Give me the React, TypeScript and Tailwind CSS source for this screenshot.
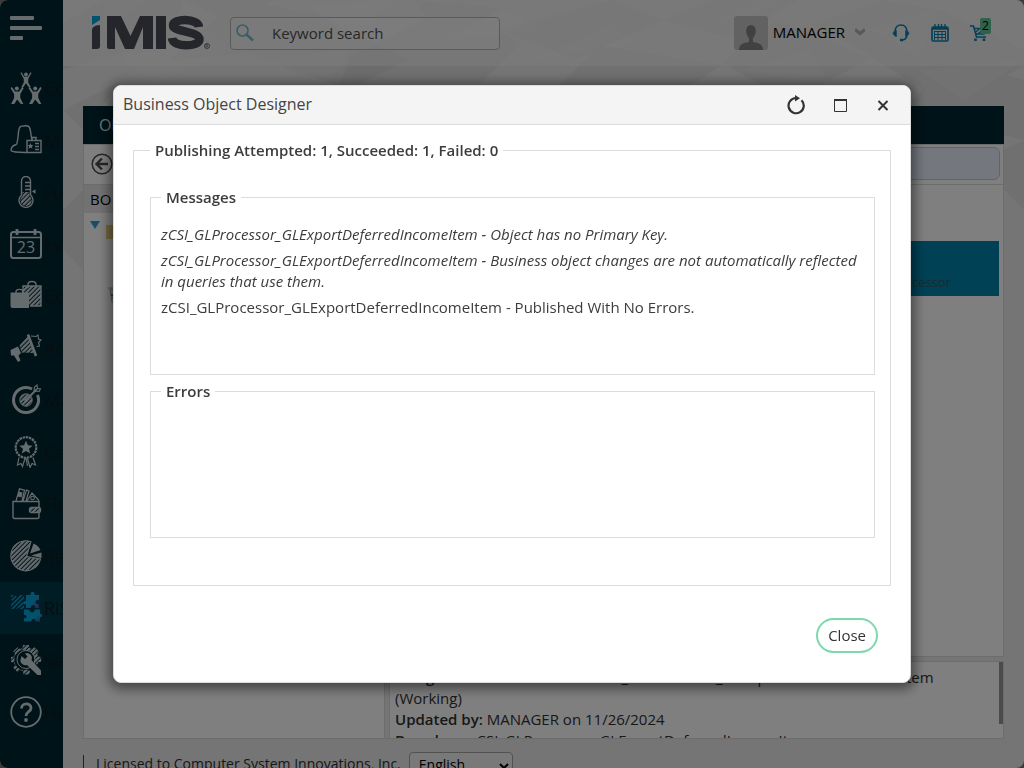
import React from 'react';

/** Stroke hatching shared by the navigation icons */
const Hatch: React.FC<{ id: string; color?: string }> = ({ id, color = '#ccd8dc' }) => (
  <pattern id={id} width="3.200" height="3.200" patternUnits="userSpaceOnUse" patternTransform="rotate(45)">
    <rect width="1.500" height="3.200" fill={color} />
  </pattern>
);

const NavSvg: React.FC<{ children: React.ReactNode }> = ({ children }) => (
  <svg
    viewBox="0 0 32 32"
    className="h-8 w-8 shrink-0 text-[#ccd8dc]"
    fill="none"
    stroke="currentColor"
    strokeWidth="1.4"
    aria-hidden="true"
  >
    {children}
  </svg>
);

const PERSON = 'M0 0l1.4-1 3.2 4.6h4L11.800-1l1.4 1-3.400 6v4l3 6h-2.400L6.600 11.500 3.800 16H.6l3-6V6z';

const CommunityIcon = () => (
  <NavSvg>
    <g fill="currentColor" stroke="none">
      <circle cx="16" cy="2.500" r="1.900" />
      <path d="M10.500 1l1-.7 2.700 4.500h3.600L20.500.3l1 .7-3.300 6v3.500l2.600 4.800h-2L16 11.200l-2.800 4.100h-2l2.600-4.800V7z" />
      <circle cx="6.800" cy="16.500" r="2" />
      <path d={PERSON} transform="translate(.5 16)" />
      <circle cx="25.200" cy="16.500" r="2" />
      <path d={PERSON} transform="translate(18.500 16)" />
    </g>
  </NavSvg>
);

const MembershipIcon = () => (
  <NavSvg>
    <path d="M6.500 20.500C9 14 7.500 6 10 3c1-1.500 2-.6 3.500-1 2-.4 4-.8 5.500.8 2 2.500 1.500 8 3 13M6.500 20.500C4 21 1.500 22.500 1 26c0 2 7 2.600 16 2.500" />
    <path d="M17 16.500h14v12H17zM22 16.500v-3h4v3" />
    <path d="M20.500 19l.9 2 2.100.1-1.600 1.500.6 2.200-2-1.200-2 1.200.6-2.200-1.600-1.500 2.100-.1z" fill="currentColor" stroke="none" />
    <path d="M25 19.500h4M25 22.500h4M25 25.500h4" />
  </NavSvg>
);

const ThermometerIcon = () => (
  <NavSvg>
    <defs><Hatch id="h-thermo" /></defs>
    <path d="M11.500 19V5a4.500 4.500 0 0 1 9 0v14a7 7 0 1 1-9 0z" />
    <path d="M12.500 16h7v4a5.600 5.600 0 1 1-7 0z" fill="url(#h-thermo)" stroke="none" />
    <path d="M15 6.500h5M15 10h5M15 13.500h5" />
    <path d="M22 15.500l3.500-2.200v4.400z" fill="currentColor" stroke="none" />
  </NavSvg>
);

const EventsIcon = () => (
  <NavSvg>
    <rect x="1" y="4" width="30" height="26" rx="2.500" strokeWidth="2" />
    <path d="M1 9.500h30" />
    <path d="M7 1v6M25 1v6" strokeWidth="2.800" />
    <text
      x="16"
      y="25"
      textAnchor="middle"
      fontSize="16"
      className="font-['Open_Sans',sans-serif]"
      fill="currentColor"
      stroke="none"
    >
      23
    </text>
  </NavSvg>
);

const CommerceIcon = () => (
  <NavSvg>
    <defs><Hatch id="h-bag" /></defs>
    <path d="M13 13V6h18v20H20" fill="url(#h-bag)" />
    <path d="M18 8V4.500c0-4 8-4 8 0V8" />
    <path d="M.5 12.500H19V28H2.500a2 2 0 0 1-2-2z" fill="currentColor" stroke="none" />
    <path d="M6 14v-2c0-3.500 7-3.500 7 0v2" />
  </NavSvg>
);

const AdvertisingIcon = () => (
  <NavSvg>
    <defs><Hatch id="h-horn" /></defs>
    <path d="M9.500 13.500L17.500 4l6 17-12-.5z" fill="url(#h-horn)" stroke="none" />
    <path d="M18 2.500l8 21.500" strokeWidth="2.600" />
    <path d="M.5 18L8 14.500l3 6.500-2.500 2.500 2 5-2.500 1.500L4 23.500H1z" fill="currentColor" stroke="none" />
    <path d="M21 4l5 .5 2-1.500.5 4 2.500 1-2.500 2.500 1 3.500-3 .5" strokeWidth="1.100" />
  </NavSvg>
);

const MarketingIcon = () => (
  <NavSvg>
    <defs><Hatch id="h-target" /></defs>
    <path d="M22 5A12.500 12.500 0 1 0 27.500 11" strokeWidth="3" />
    <circle cx="16" cy="16" r="6.200" fill="url(#h-target)" strokeWidth="1" />
    <path d="M15.500 16.500L27 5" strokeWidth="2" />
    <path d="M24 7l.5-4L27 1l.5 3.500 3 .5-1.500 2.500z" strokeWidth="1.100" />
    <circle cx="16" cy="16" r="1.800" fill="currentColor" stroke="none" />
  </NavSvg>
);

const CertificationIcon = () => (
  <NavSvg>
    <circle cx="16" cy="11.500" r="10.300" strokeWidth="2.200" strokeDasharray="2.500 .7" />
    <path d="M16 4.800l1.900 4.500 4.800.4-3.700 3.100 1.200 4.700-4.200-2.500-4.200 2.500 1.200-4.700-3.700-3.100 4.800-.4z" fill="currentColor" stroke="none" />
    <path d="M9 21.500l-1.500 7.500 3.500-1.500 1.500 3 2.500-8M23 21.500l2.500 7.500-3.500-1.500-2 4-2.500-9M16 22l1.500 8" strokeWidth="1.200" />
  </NavSvg>
);

const FinanceIcon = () => (
  <NavSvg>
    <defs><Hatch id="h-wallet" /></defs>
    <path d="M29 19v-5.500H3V29a1.500 1.500 0 0 0 1.500 1.500h23A1.500 1.500 0 0 0 29 29v-4" />
    <path d="M6 13L9.500.8l5 1.400L12 13M13 13l3.500-11 2.500 1-3 10M17 13l5-8 7 7.500" strokeWidth="1.200" />
    <path d="M8.500 3.500l4 1-1 5-4-1z" fill="currentColor" stroke="none" />
    <circle cx="22.500" cy="10" r="1.800" strokeWidth="1.100" />
    <rect x="19.500" y="19.500" width="11" height="5" rx="2" fill="url(#h-wallet)" />
  </NavSvg>
);

const ReportsIcon = () => (
  <NavSvg>
    <defs><Hatch id="h-pie" /></defs>
    <path d="M21 1.700A15 15 0 1 0 30.500 19L16.500 16.500z" fill="url(#h-pie)" strokeWidth="1.100" />
    <path d="M20 13.500l3.500-10c3.500 1.400 5.700 3.600 7 6.500zM21 15.500l10.500-3v5.500z" fill="currentColor" stroke="none" />
  </NavSvg>
);

const RiseIcon = () => (
  <svg viewBox="0 0 32 32" className="h-8 w-8 shrink-0" aria-hidden="true">
    <defs>
      <Hatch id="h-rise" color="#109bd0" />
      <linearGradient id="rise" x1="0" y1="0" x2="1" y2="1">
        <stop offset=".6" stopColor="#07a5da" />
        <stop offset="1" stopColor="#64408c" />
      </linearGradient>
    </defs>
    <path d="M1 3h4l2 2 3-2h4v4l-2 1.500L14 12v5H9l-1-2-1.500 2H1v-5l2-2-2-3z" fill="url(#h-rise)" />
    <path
      d="M16 3h4.500V2c0-2.600 4-2.600 4 0v1H29v5h-1.500c-2.500 0-2.500 4 0 4H29v4h-4v-1c0-2.500-4-2.500-4 0v1h-5v-4c-3 2-4-4 0-3z"
      fill="url(#rise)"
    />
    <path
      d="M14 17.500h5.500c-1 4 6 4 5 0H30V22c3-1 3 4 0 3v4.500h-4.500c1-3.500-5-3.500-4 0H14V26c3 1.500 4-4 0-3z"
      fill="url(#rise)"
    />
  </svg>
);

const SettingsIcon = () => (
  <NavSvg>
    <defs><Hatch id="h-gear" /></defs>
    <path
      d="M13 1h6l.5 3 2.500 1 2.500-1.800L29 7.500 27.200 10l1 2.500 3 .5v5h-3l-1 2.800-3-3a10 10 0 1 0-7 7.800l2.800 1.400-.5 3.500h-6l-.5-3.500-3-1L7.500 28 3 23.500l2-2.700-1-2.300-3-.5v-5l3-.5 1-2.500L3.200 7.500 7.500 3.200 10 5l2.500-1z"
      fill="url(#h-gear)"
      stroke="none"
    />
    <circle cx="16" cy="15.500" r="9" strokeWidth="1" />
    <path d="M11.500 12l3.500 3 2.500-2.500L15 9.500a5 5 0 0 1 6.500 6.500l9.500 10.500v4.500h-3.500L17 21a5 5 0 0 1-6-7z" fill="currentColor" stroke="none" />
  </NavSvg>
);

const HelpIcon = () => (
  <NavSvg>
    <circle cx="16" cy="16" r="14.800" strokeWidth="1.800" />
    <path d="M11.500 12.500c0-6 9.500-6 9.500-.5 0 4-5 3.500-5 8" strokeWidth="2.800" />
    <circle cx="16" cy="24" r="1.900" fill="currentColor" stroke="none" />
  </NavSvg>
);

const NAV_ITEMS = [
  { label: 'Community', icon: CommunityIcon },
  { label: 'Membership', icon: MembershipIcon },
  { label: 'Fundraising', icon: ThermometerIcon },
  { label: 'Events', icon: EventsIcon },
  { label: 'Commerce', icon: CommerceIcon },
  { label: 'Advertising', icon: AdvertisingIcon },
  { label: 'Marketing', icon: MarketingIcon },
  { label: 'Certification', icon: CertificationIcon },
  { label: 'Finance', icon: FinanceIcon },
  { label: 'Reports', icon: ReportsIcon },
  { label: 'RiSE', icon: RiseIcon, active: true },
  { label: 'Settings', icon: SettingsIcon },
  { label: 'Help', icon: HelpIcon },
];

/**
 * Collapsed navigation rail
 */
const Sidebar: React.FC = () => (
  <aside className="w-[63px] shrink-0 overflow-hidden bg-[#002631]">
    <button type="button" aria-label="Toggle menu" className="mt-4 ml-[10px] block h-6 w-8 text-[#ccd8dc]">
      <svg viewBox="0 0 32 24" fill="currentColor" aria-hidden="true">
        <rect width="24" height="4" rx="1" />
        <rect y="10" width="32" height="4" rx="1" />
        <rect y="20" width="13" height="4" rx="1" />
      </svg>
    </button>
    <nav className="mt-[22px]">
      {NAV_ITEMS.map(({ label, icon: Icon, active }) => (
        <a
          key={label}
          href="#"
          className={`flex h-[52px] items-center gap-[2px] pl-[10px] text-lg whitespace-nowrap text-[#0c1c22] ${
            active ? 'bg-[#00394a]' : ''
          }`}
        >
          <Icon />
          {label}
        </a>
      ))}
    </nav>
  </aside>
);

/** Low-contrast facets behind the whole page */
const Facets: React.FC = () => (
  <svg
    className="absolute inset-0 h-full w-full"
    viewBox="0 0 1024 768"
    preserveAspectRatio="xMidYMin slice"
    aria-hidden="true"
  >
    <g fill="#000" fillOpacity=".035">
      <path d="M63 22L104 0h80l-16 40-105 30zM168 60l70-60 80 14-80 40zM184 0h90l-36 26zM238 50l80-36 90 46-60 30z" />
      <path d="M340 85l10-28 110-57 60 44-40 40zM414 0l90 8-62 30zM400 60l90-12-30 37zM500 30l112-30 52 20-90 40z" />
      <path d="M664 20L710 0h90l-70 38zM560 85l40-40 122 20-30 20zM722 62l54-42 96 38-84 44zM810 24l72-24 60 10-82 40z" />
      <path d="M860 50l82-40 82 40v16l-74 40zM904 110l46-52 74 22v60zM1004 150l20-10v70l-20-20zM63 110l60-30-40 50zM63 210l20-20v80l-20-20z" />
    </g>
    <g fill="#fff" fillOpacity=".12">
      <path d="M104 0h44l-44 30zM120 60l92-30 20 20-80 34zM310 6l84-6-44 38zM270 60l80-12-20 37zM444 40l60-30 40 20z" />
      <path d="M530 60l84-36 20 20zM700 30l60-30 20 4zM740 70l70-20 20 35zM870 30l72-24-24 50zM920 70l104-10-60 40z" />
    </g>
  </svg>
);

/**
 * Product logo
 */
const Logo: React.FC = () => (
  <svg viewBox="0 0 120 36" className="h-9 w-[120px]" role="img" aria-label="iMIS">
    <path d="M2 1h8v4l-8 5z" fill="#00a4dc" />
    <path d="M2 15c0-3 3-4.500 8-5v21c0 2-1 3-3 3H2z" fill="#4b4b59" />
    <path d="M17 1h14l9.500 20L50 1h13v33H53V12l-9 22h-9L25 12v22h-6a2 2 0 0 1-2-2zM66 1h10v33H66z" fill="#4b4b59" />
    <path
      d="M109 12C108 3 83 3 83 10.500C83 17 109.500 16 109.500 24.500C109.500 32 83 33 82 23"
      fill="none"
      stroke="#4b4b59"
      strokeWidth="8.500"
    />
    <circle cx="117" cy="31" r="2.500" fill="none" stroke="#4b4b59" strokeWidth=".8" />
    <path d="M116.200 32.600v-3h1.200v1.500h-1.200M117.200 31.200l.8 1.400" fill="none" stroke="#4b4b59" strokeWidth=".5" />
  </svg>
);

const Header: React.FC = () => (
  <header className="flex h-[66px] shrink-0 items-center bg-white/45 pr-9 pl-[27px]">
    <Logo />
    <label className="ml-5 flex h-[33px] w-[270px] items-center rounded border border-[#b5b5b5] bg-white/40">
      <svg viewBox="0 0 18 18" className="ml-[5px] h-[18px] w-[18px] shrink-0" fill="none" stroke="#7bb9cd" aria-hidden="true">
        <circle cx="6.500" cy="6.500" r="5.500" strokeWidth="1.700" />
        <path d="M10.500 10.500l6.500 6" strokeWidth="2.600" />
      </svg>
      <input
        type="search"
        aria-label="Keyword search"
        placeholder="Keyword search"
        className="w-full min-w-0 bg-transparent pl-[18px] text-[15px] outline-none placeholder:text-[#505050]"
      />
    </label>
    <div className="ml-auto flex items-center">
      <svg viewBox="0 0 34 34" className="h-[34px] w-[34px] rounded-[3px] bg-[#c4c4c4]" fill="#828282" aria-hidden="true">
        <path d="M5 34c0-5 3-7 10-8v-4c-4-4-4-13 2-13s6 9 2 13v4c7 1 10 3 10 8z" />
      </svg>
      <button type="button" className="ml-[5px] flex items-center gap-[10px] pb-[2px] text-[15px] text-black">
        MANAGER
        <svg viewBox="0 0 10 8" className="h-2 w-[10px]" fill="none" stroke="#b0b0b0" strokeWidth="3" aria-hidden="true">
          <path d="M0 1.500l5 4 5-4" />
        </svg>
      </button>
      <button type="button" aria-label="Support" className="ml-[27px]">
        <svg viewBox="0 0 18 18" className="h-[18px] w-[18px]" fill="none" stroke="#087fae" strokeWidth="1.500" aria-hidden="true">
          <path d="M3 7c1-8 11-8 12 0M15 12c-1 3-3 4-5 4" />
          <path d="M4.500 6.500v6C1 12 0 8 2.500 7.200zM13.500 6.500v6c3.500-.5 4.500-4.500 2-5.300z" fill="#087fae" strokeWidth=".5" />
          <path d="M8 16h3" strokeWidth="2.400" />
        </svg>
      </button>
      <button type="button" aria-label="Calendar" className="ml-[21px]">
        <svg viewBox="0 0 18 18" className="h-[18px] w-[18px]" fill="none" stroke="#087fae" aria-hidden="true">
          <rect x="1" y="3" width="16" height="14" rx="1.500" strokeWidth="1.700" />
          <path d="M1 4.500h16" strokeWidth="2.500" />
          <path d="M3 7.500h12M3 10.500h12M3 13.500h12M3.500 7v9M7 7v9M11 7v9M14.500 7v9" />
          <path d="M4 0v4M7.500 0v4M10.500 0v4M14 0v4" strokeWidth="1.300" />
        </svg>
      </button>
      <button type="button" aria-label="Cart" className="relative ml-[21px]">
        <svg viewBox="0 0 18 18" className="h-[18px] w-[18px]" fill="none" stroke="#087fae" strokeWidth="1.500" aria-hidden="true">
          <path d="M0 2h3.500l3 11H16M4 4.500h12l-2 5.500H6" />
          <path d="M6 8l3-3M8 10l5-5M11 10l4-4" strokeWidth="1.200" />
          <path d="M5.500 14.500v2.500M14 14.500v2.500" strokeWidth="2.600" />
        </svg>
        <span className="absolute -top-[6px] left-[10px] h-4 w-[11px] rounded-[2px] bg-[#5fc397] text-center text-xs leading-4 text-black">
          2
        </span>
      </button>
    </div>
  </header>
);

/**
 * Designer page that sits underneath the dialog
 */
const DesignerPage: React.FC = () => (
  <main className="mx-5 mt-10 flex h-[633px] shrink-0 flex-col overflow-hidden border-b border-[#d8d8d8] text-[15px]">
    <h1 className="h-[38px] shrink-0 bg-[#002631] pl-4 text-base leading-[38px] text-[#d9e5e9]">Object Designer</h1>
    <div className="flex h-[41px] shrink-0 items-center border border-[#d8d8d8] bg-white pr-[3px] pb-[2px] pl-[7px]">
      <button type="button" aria-label="Back">
        <svg viewBox="0 0 22 22" className="h-[22px] w-[22px]" fill="none" stroke="#4c4c4c" aria-hidden="true">
          <circle cx="11" cy="11" r="9.800" strokeWidth="1.500" />
          <path d="M17 11H6M11 5.500L5.500 11l5.500 5.500" strokeWidth="2.400" />
        </svg>
      </button>
      <input
        type="text"
        aria-label="Object name"
        className="ml-auto h-[33px] w-[300px] rounded-md border border-[#c4c7d0] bg-[#e8effd]"
      />
    </div>
    <div className="flex min-h-0 flex-1 gap-1">
      <section className="w-[302px] shrink-0 border-x border-[#d8d8d8] bg-white">
        <h2 className="h-7 bg-[#e4e4e4] pl-[6px] leading-7 text-black">BO Designer</h2>
        <div className="flex items-start pt-2 pl-[6px]">
          <svg viewBox="0 0 10 8" className="h-2 w-[10px]" fill="#2b9ed4" aria-hidden="true">
            <path d="M0 0h10L5 8z" />
          </svg>
          <svg viewBox="0 0 18 14" className="mt-1 ml-[6px] h-[14px] w-[18px]" fill="#e5cd7b" aria-hidden="true">
            <path d="M0 0h18v14H0z" />
          </svg>
        </div>
        <svg viewBox="0 0 16 16" className="mt-[48px] ml-6 h-4 w-4" fill="#e0e0e0" stroke="#aaa" aria-hidden="true">
          <path d="M2 2h12l-2 13H4zM0 1h16" />
          <path d="M3 8l4 1-2 3" stroke="#24923c" strokeWidth="2" />
        </svg>
      </section>
      <div className="flex min-w-0 flex-1 flex-col gap-1">
        <section className="min-h-0 flex-1 border border-t-0 border-[#d8d8d8] bg-white pt-14 pr-1 pl-1">
          <div className="flex h-[55px] items-end justify-end bg-[#0082ac] pr-12 pb-1 text-[13px] text-[#36545d]">
            zCSI_GLProcessor
          </div>
        </section>
        <section className="flex h-[77px] overflow-hidden border border-b-0 border-[#d8d8d8] bg-white">
          <div className="min-w-0 flex-1 pt-[5px] pl-[5px] leading-[21px] text-[#303030]">
            <p className="max-w-[560px]">
              <b className="font-semibold">Design version of the item:</b> zCSI_GLProcessor_GLExportDeferredIncomeItem (Working)
            </p>
            <p><b className="font-semibold">Updated by:</b> MANAGER on 11/26/2024</p>
            <p><b className="font-semibold">Based on:</b> zCSI_GLProcessor_GLExportDeferredIncomeItem</p>
          </div>
          <div className="h-[62px] w-1 bg-[#969696]" />
        </section>
      </div>
    </div>
  </main>
);

const Footer: React.FC = () => (
  <footer className="mt-[13px] flex shrink-0 pl-5 text-sm">
    <p className="mt-[3px] h-7 border-l border-[#444] pl-3 leading-[18px] text-[#303030]">
      Licensed to Computer System Innovations, Inc.
    </p>
    <select
      aria-label="Language"
      className="ml-2 h-7 w-[104px] rounded border border-[#a5a5a5] bg-[#f2f2f2] px-[5px] pb-1 text-sm text-black"
    >
      <option>English</option>
    </select>
  </footer>
);

const MESSAGES = [
  { text: 'zCSI_GLProcessor_GLExportDeferredIncomeItem - Object has no Primary Key.', italic: true },
  {
    text: 'zCSI_GLProcessor_GLExportDeferredIncomeItem - Business object changes are not automatically reflected in queries that use them.',
    italic: true,
  },
  { text: 'zCSI_GLProcessor_GLExportDeferredIncomeItem - Published With No Errors.', italic: false },
];

/**
 * Publishing result dialog
 */
const PublishDialog: React.FC = () => (
  <div
    role="dialog"
    aria-modal="true"
    aria-labelledby="dialog-title"
    className="w-full max-w-[798px] overflow-hidden rounded-lg border border-[#dcdcdc] bg-white text-[15px] text-[#3c3c3c] shadow-[0_2px_12px_4px_rgba(0,0,0,0.45)]"
  >
    <div className="flex h-[39px] items-center border-b border-[#dcdcdc] bg-[#f4f4f4] pr-[17px] pl-[9px]">
      <h2 id="dialog-title" className="mr-auto pb-[2px] text-base text-[#444]">Business Object Designer</h2>
      <button type="button" aria-label="Reload">
        <svg viewBox="0 0 20 20" className="h-5 w-5" fill="none" stroke="#333" strokeWidth="2.200" aria-hidden="true">
          <path d="M15.500 5.200A7.600 7.600 0 1 1 10 3" />
          <path d="M9 0l5 3.200L9 6.500z" fill="#333" stroke="none" />
        </svg>
      </button>
      <button type="button" aria-label="Maximize" className="ml-7">
        <svg viewBox="0 0 13 13" className="h-[13px] w-[13px]" fill="none" stroke="#333" aria-hidden="true">
          <path d="M.5 1v11.500h12V1" />
          <path d="M0 1h13" strokeWidth="2" />
        </svg>
      </button>
      <button type="button" aria-label="Close dialog" className="ml-[26px] p-1">
        <svg viewBox="0 0 12 12" className="h-3 w-3" fill="none" stroke="#333" strokeWidth="2" aria-hidden="true">
          <path d="M1.500 2l9 9M10.500 2l-9 9" />
        </svg>
      </button>
    </div>
    <div className="px-[19px] pt-[14px] pb-[29px]">
      <fieldset className="border border-[#dcdcdc] pr-[15px] pb-[47px] pl-4">
        <legend className="px-[5px] leading-[22px] font-semibold">
          Publishing Attempted: 1, Succeeded: 1, Failed: 0
        </legend>
        <fieldset className="mt-[25px] h-[189px] border border-[#dcdcdc] px-[10px]">
          <legend className="px-[5px] leading-[22px] font-semibold">Messages</legend>
          <ul className="mt-4 space-y-[5px] leading-[21px]">
            {MESSAGES.map(({ text, italic }) => (
              <li key={text} className={italic ? 'italic' : ''}>{text}</li>
            ))}
          </ul>
        </fieldset>
        <fieldset className="mt-[5px] h-[158px] border border-[#dcdcdc] px-[10px]">
          <legend className="px-[5px] leading-[22px] font-semibold">Errors</legend>
        </fieldset>
      </fieldset>
      <div className="mt-8 flex justify-end pr-[13px]">
        <button type="button" className="h-[35px] rounded-full border-2 border-[#7dd8ae] px-[10px] text-[#333]">
          Close
        </button>
      </div>
    </div>
  </div>
);

export default function App() {
  return (
    <div className="h-screen overflow-hidden bg-[#777] font-['Open_Sans',sans-serif]">
      <div className="relative flex h-full overflow-hidden rounded-lg bg-[#eaeaea]">
        <Facets />
        <div className="relative flex min-w-0 flex-1">
          <Sidebar />
          <div className="flex min-w-0 flex-1 flex-col">
            <Header />
            <DesignerPage />
            <Footer />
          </div>
        </div>
      </div>
      <div className="fixed inset-0 flex items-center justify-center bg-black/50">
        <PublishDialog />
      </div>
    </div>
  );
}
